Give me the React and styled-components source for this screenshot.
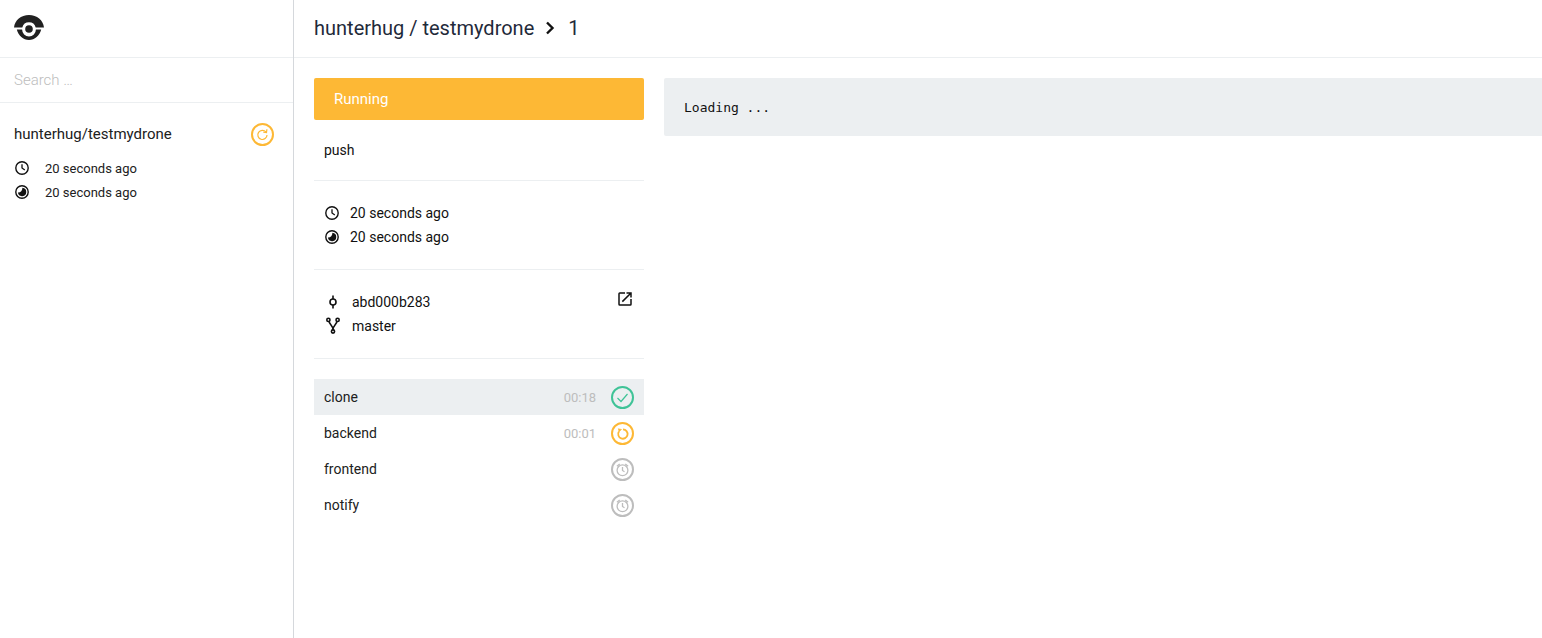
import React from 'react';
import styled, { createGlobalStyle } from 'styled-components';

const GlobalStyle = createGlobalStyle`
  html, body {
    margin: 0;
    padding: 0;
    background: #fff;
  }
  body {
    font-family: Roboto, sans-serif;
    color: #192d46;
  }
  * {
    box-sizing: border-box;
  }
`;

const Page = styled.div`
  display: flex;
  width: 100%;
  height: 638px;
  overflow: hidden;
`;

const Sidebar = styled.aside`
  width: 294px;
  flex: none;
  border-right: 1px solid #d5d8dc;
`;

const Brand = styled.div`
  height: 58px;
  padding: 14px 14px 0;
  border-bottom: 1px solid #eceff1;
`;

const SearchBox = styled.div`
  height: 45px;
  border-bottom: 1px solid #eceff1;
`;

const SearchInput = styled.input`
  display: block;
  width: 100%;
  height: 44px;
  padding: 0 14px;
  border: 0;
  outline: 0;
  background: transparent;
  font: 300 15px Roboto, sans-serif;
  &::placeholder {
    color: #bdbdbd;
    opacity: 1;
  }
`;

const RepoItem = styled.div`
  padding: 19px 19px 0 14px;
`;

const RepoHead = styled.div`
  display: flex;
  align-items: center;
  justify-content: space-between;
  height: 24px;
  margin-bottom: 10px;
  font-size: 15px;
  color: #212121;
`;

const RepoMeta = styled.div`
  display: flex;
  align-items: center;
  height: 24px;
  font-size: 13px;
  color: #212121;
  svg {
    margin-right: 15px;
  }
`;

const Main = styled.main`
  flex: 1;
  min-width: 0;
`;

const Header = styled.header`
  display: flex;
  align-items: center;
  height: 58px;
  padding: 0 20px 2px;
  border-bottom: 1px solid #eceff1;
  font-size: 20px;
  color: #1f2a3a;
  svg {
    margin: 0 13px 0 11px;
  }
`;

const Content = styled.div`
  display: flex;
  gap: 20px;
  padding: 20px 0 0 20px;
`;

const Details = styled.div`
  width: 330px;
  flex: none;
`;

const StatusBanner = styled.div`
  display: flex;
  align-items: center;
  height: 42px;
  padding: 0 20px;
  border-radius: 2px;
  background: #fdb835;
  color: #fff;
  font-size: 15px;
`;

const Section = styled.section`
  border-bottom: 1px solid #eceff1;
  font-size: 14px;
  color: #111;
`;

const Event = styled(Section)`
  display: flex;
  align-items: center;
  height: 61px;
  padding: 0 10px;
`;

const InfoSection = styled(Section)`
  position: relative;
  height: 89px;
  padding: 20px 10px 0;
`;

const InfoRow = styled.div`
  display: flex;
  align-items: center;
  height: 24px;
  svg {
    margin-right: ${p => p.$gap}px;
  }
`;

const ExternalLink = styled.a`
  position: absolute;
  top: 20px;
  right: 10px;
  display: block;
  width: 18px;
  height: 18px;
  color: #111;
`;

const Steps = styled.div`
  padding-top: 20px;
`;

const Step = styled.div`
  display: flex;
  align-items: center;
  height: 36px;
  padding: 0 10px;
  background: ${p => (p.$active ? '#eceff1' : 'transparent')};
  font-size: 14px;
  color: #212121;
`;

const StepName = styled.span`
  flex: 1;
`;

const StepTime = styled.span`
  margin-right: 14px;
  font-size: 13px;
  color: #bdbdbd;
`;

const LogBox = styled.div`
  flex: 1;
  height: 58px;
  padding: 0 20px;
  border-radius: 2px 0 0 2px;
  background: #eceff1;
  font: 13px/60px "DejaVu Sans Mono", monospace;
  color: #111;
`;

const Logo = () => (
  <svg width="30" height="26" viewBox="0 0 30 26" style={{ display: 'block' }}>
    <path d="M0 13.5C.8 6.2 7 1 15 1s14.2 5.2 15 12.5h-8.3a6.9 6.9 0 0 0-13.4 0z" fill="#212121" />
    <path d="M2.8 15.5h5.3a6.9 6.9 0 0 0 13.8 0h5.3C25.6 21.8 20.8 26 15 26S4.4 21.8 2.8 15.5z" fill="#212121" />
    <circle cx="15" cy="15" r="3.8" fill="#212121" />
  </svg>
);

const ClockIcon = () => (
  <svg width="16" height="16" viewBox="0 0 16 16" fill="none" stroke="#111" style={{ flex: 'none' }}>
    <circle cx="8" cy="8" r="6.2" strokeWidth="1.4" />
    <path d="M8 4.2V8l2.8 2" strokeWidth="1.3" />
  </svg>
);

const ElapsedIcon = () => (
  <svg width="16" height="16" viewBox="0 0 16 16" style={{ flex: 'none' }}>
    <circle cx="8" cy="8" r="6.2" fill="none" stroke="#111" strokeWidth="1.4" />
    <path d="M8.4 3.8A4.2 4.2 0 1 1 3.9 8.6C6.5 8.8 8.4 6.6 8.4 3.8z" fill="#111" />
  </svg>
);

const CommitIcon = () => (
  <svg width="18" height="18" viewBox="0 0 18 18" fill="none" stroke="#111" strokeWidth="1.6" style={{ flex: 'none' }}>
    <circle cx="9" cy="9" r="3" />
    <path d="M9 2.5V6M9 12v3.5" />
  </svg>
);

const BranchIcon = () => (
  <svg width="18" height="18" viewBox="0 0 18 18" fill="none" stroke="#111" strokeWidth="1.6" style={{ flex: 'none' }}>
    <circle cx="4.4" cy="2.9" r="1.6" />
    <circle cx="13.6" cy="2.9" r="1.6" />
    <circle cx="9" cy="14.5" r="1.6" />
    <path d="M5 4.4C5.6 7.8 9 8.2 9 12.9M13 4.4C12.4 7.8 9 8.2 9 12.9" />
  </svg>
);

const ExternalIcon = () => (
  <svg width="18" height="18" viewBox="0 0 24 24" fill="#111">
    <path d="M19 19H5V5h7V3H5a2 2 0 0 0-2 2v14a2 2 0 0 0 2 2h14a2 2 0 0 0 2-2v-7h-2v7zM14 3v2h3.59l-9.83 9.83 1.41 1.41L19 6.41V10h2V3h-7z" />
  </svg>
);

const ChevronIcon = () => (
  <svg width="10" height="14" viewBox="0 0 10 14" fill="none" stroke="#111" strokeWidth="2.4">
    <path d="M2 1.5L7.5 7 2 12.5" />
  </svg>
);

const statusColors = { success: '#3fc397', running: '#fdb835', pending: '#bdbdbd' };

const StatusIcon = ({ status }) => {
  const color = statusColors[status];
  return (
    <svg width="24" height="24" viewBox="-0.5 -0.5 24 24" fill="none" stroke={color} style={{ flex: 'none' }}>
      <circle cx="12" cy="12" r="10.5" strokeWidth="2" />
      {status === 'success' && <path d="M7 12.5l3.5 3.5L17 8.5" strokeWidth="1.2" />}
      {status === 'running' && (
        <g>
          <path d="M12.5 7.8A4.7 4.7 0 1 1 8.4 10" strokeWidth="1.8" />
          <path d="M7.8 7.2L11 8 8.6 10.2z" fill={color} strokeWidth="0.6" />
        </g>
      )}
      {status === 'pending' && (
        <g strokeWidth="1.3">
          <circle cx="12" cy="12.8" r="5.4" />
          <path d="M12 9.6v3.4l2 1.2M6.4 8.8l2.8-2.4M17.6 8.8l-2.8-2.4" />
        </g>
      )}
    </svg>
  );
};

const RepoStatusIcon = () => (
  <svg width="24" height="24" viewBox="-0.5 -0.5 24 24" fill="none" stroke="#fdb835" style={{ flex: 'none' }}>
    <circle cx="12" cy="12" r="10.5" strokeWidth="2" />
    <path d="M15.4 9.4a4.6 4.6 0 1 0 1.1 3" strokeWidth="1.2" />
    <path d="M12.8 9.6l3.2.4.4-3.2" strokeWidth="1.2" />
  </svg>
);

const steps = [
  { name: 'clone', time: '00:18', status: 'success', active: true },
  { name: 'backend', time: '00:01', status: 'running' },
  { name: 'frontend', status: 'pending' },
  { name: 'notify', status: 'pending' },
];

const App = () => {
  return (
    <Page>
      <GlobalStyle />
      <Sidebar>
        <Brand>
          <Logo />
        </Brand>
        <SearchBox>
          <SearchInput placeholder="Search …" />
        </SearchBox>
        <RepoItem>
          <RepoHead>
            hunterhug/testmydrone
            <RepoStatusIcon />
          </RepoHead>
          <RepoMeta>
            <ClockIcon />
            20 seconds ago
          </RepoMeta>
          <RepoMeta>
            <ElapsedIcon />
            20 seconds ago
          </RepoMeta>
        </RepoItem>
      </Sidebar>
      <Main>
        <Header>
          hunterhug / testmydrone
          <ChevronIcon />
          1
        </Header>
        <Content>
          <Details>
            <StatusBanner>Running</StatusBanner>
            <Event>push</Event>
            <InfoSection>
              <InfoRow $gap={10}>
                <ClockIcon />
                20 seconds ago
              </InfoRow>
              <InfoRow $gap={10}>
                <ElapsedIcon />
                20 seconds ago
              </InfoRow>
            </InfoSection>
            <InfoSection>
              <InfoRow $gap={10}>
                <CommitIcon />
                abd000b283
              </InfoRow>
              <InfoRow $gap={10}>
                <BranchIcon />
                master
              </InfoRow>
              <ExternalLink>
                <ExternalIcon />
              </ExternalLink>
            </InfoSection>
            <Steps>
              {steps.map(step => (
                <Step key={step.name} $active={step.active}>
                  <StepName>{step.name}</StepName>
                  {step.time && <StepTime>{step.time}</StepTime>}
                  <StatusIcon status={step.status} />
                </Step>
              ))}
            </Steps>
          </Details>
          <LogBox>Loading ...</LogBox>
        </Content>
      </Main>
    </Page>
  );
};

export default App;
